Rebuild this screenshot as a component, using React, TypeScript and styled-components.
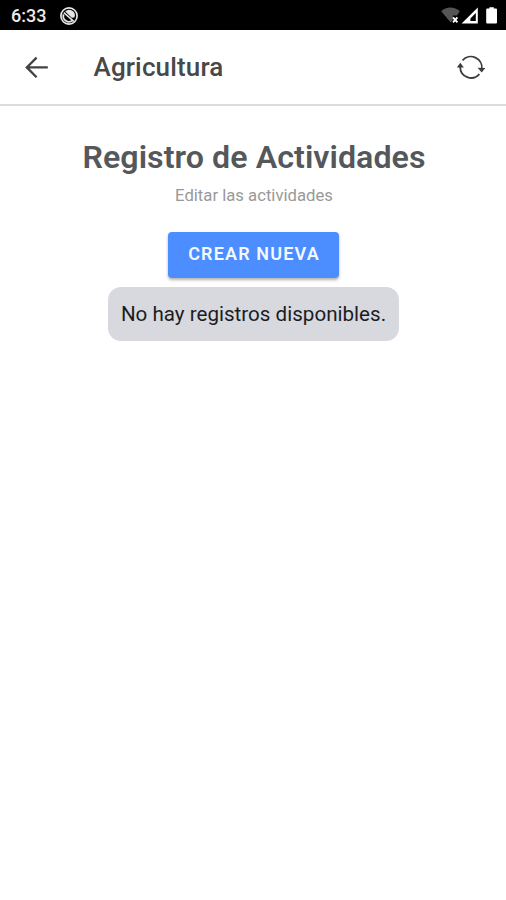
import React from "react"
import styled, { createGlobalStyle } from "styled-components"

function App() {
   return (
      <Screen>
         <GlobalStyle />
         <StatusBar>
            <Clock>6:33</Clock>
            <SyncIcon />
            <StatusIcons />
         </StatusBar>
         <Toolbar>
            <IconButton aria-label="Volver">
               <BackIcon />
            </IconButton>
            <ToolbarTitle>Agricultura</ToolbarTitle>
            <IconButton aria-label="Actualizar">
               <RefreshIcon />
            </IconButton>
         </Toolbar>
         <Content>
            <Heading>Registro de Actividades</Heading>
            <Subtitle>Editar las actividades</Subtitle>
            <CreateButton>Crear nueva</CreateButton>
            <EmptyChip>No hay registros disponibles.</EmptyChip>
         </Content>
      </Screen>
   )
}

function SyncIcon() {
   return (
      <svg width="20" height="20" viewBox="0 0 20 20" fill="none">
         <circle cx="10" cy="10" r="8.1" stroke="#e6e6e6" strokeWidth="1.7" />
         <path d="M6.2 5.6A5.6 5.6 0 0 1 15.4 11.6L12.8 11.8Z" fill="#e6e6e6" />
         <path d="M4.6 8.4A5.6 5.6 0 0 0 13.6 14.4" stroke="#e6e6e6" strokeWidth="1.8" />
         <path d="M4.8 6.6L14.8 15.4" stroke="#e6e6e6" strokeWidth="1.5" />
      </svg>
   )
}

function StatusIcons() {
   return (
      <Indicators width="60" height="20" viewBox="0 0 60 20">
         {/* wifi without connection */}
         <path d="M0.2 6.2C5.2 1.2 13.6 1.2 18.8 6.2L16 10.4H11.8V14.8L9.7 17.4Z" fill="#555" />
         <path d="M12 12.4L16.4 17.4M16.4 12.4L12 17.4" stroke="#fff" strokeWidth="1.9" />
         {/* signal */}
         <path fillRule="evenodd" d="M36.8 2.4V18.6H20.6ZM34.8 8V16H29.4V13.6Z" fill="#fff" />
         {/* battery */}
         <path d="M48.4 2.2H52.8V3.6H55Q56 3.6 56 4.6V17.6Q56 18.6 55 18.6H46.2Q45.2 18.6 45.2 17.6V4.6Q45.2 3.6 46.2 3.6H48.4Z" fill="#fff" />
      </Indicators>
   )
}

function BackIcon() {
   return (
      <svg width="24" height="22" viewBox="0 0 24 22" fill="none" stroke="#424242" strokeWidth="2.3">
         <path d="M12.6 1.6L2.8 11.4L12.6 21.2M3 11.4H23.8" />
      </svg>
   )
}

function RefreshIcon() {
   return (
      <svg width="28" height="26" viewBox="0 0 28 26" fill="none" stroke="#3c3c3c" strokeWidth="1.8">
         <path d="M5.6 6.4A11 11 0 0 1 24.8 15" />
         <path d="M22.4 20.2A11 11 0 0 1 3.2 12.6" />
         <path d="M20.6 13.8L24.7 18.4L28.2 14Z" fill="#3c3c3c" stroke="none" />
         <path d="M-0.2 13.4H6.9L3.3 8.8Z" fill="#3c3c3c" stroke="none" />
      </svg>
   )
}

const GlobalStyle = createGlobalStyle`
   * {
      box-sizing: border-box;
   }

   body {
      margin: 0;
      background: #fff;
      font-family: Roboto, "Liberation Sans", sans-serif;
   }
`

const Screen = styled.div`
   display: flex;
   flex-direction: column;
   min-height: 100vh;
   background: #fff;
`

const StatusBar = styled.div`
   display: flex;
   align-items: center;
   height: 30px;
   padding: 2px 5px 0 11px;
   background: #000;
`

const Clock = styled.span`
   width: 48px;
   color: #ececec;
   font-size: 18px;
   font-weight: 500;
   line-height: 28px;
`

const Indicators = styled.svg`
   margin-left: auto;
   margin-bottom: 2px;
`

const Toolbar = styled.header`
   display: flex;
   align-items: center;
   height: 76px;
   padding: 0 21px 0 24px;
   border-bottom: 2px solid #dcdcdc;
`

const IconButton = styled.button`
   display: flex;
   padding: 0;
   border: 0;
   background: none;
`

const ToolbarTitle = styled.div`
   flex: 1;
   padding-left: 45.5px;
   color: #484848;
   font-size: 26px;
   font-weight: 500;
   line-height: 32px;
   letter-spacing: 0.15px;
`

const Content = styled.main`
   display: flex;
   flex-direction: column;
   align-items: center;
   padding-top: 31px;
`

const Heading = styled.h1`
   margin: 0;
   padding-left: 2px;
   color: #55585b;
   font-size: 32.2px;
   font-weight: 600;
   line-height: 40px;
   letter-spacing: 0.05px;
`

const Subtitle = styled.p`
   margin: 9px 0 0;
   padding-left: 2px;
   color: #999;
   font-size: 16.7px;
   line-height: 20px;
`

const CreateButton = styled.button`
   width: 171px;
   height: 46px;
   margin-top: 26px;
   padding: 0 0 2px 2px;
   border: 0;
   border-radius: 4px;
   background: #4c8dff;
   box-shadow: 0 2px 3px rgba(0, 0, 0, 0.3);
   color: #f4f8ff;
   font-family: inherit;
   font-size: 18px;
   font-weight: 600;
   line-height: 20px;
   letter-spacing: 1.15px;
   text-transform: uppercase;
`

const EmptyChip = styled.div`
   width: 291px;
   margin-top: 9px;
   padding-left: 1px;
   border-radius: 13px;
   background: #d7d9df;
   color: #1c1d1f;
   font-size: 20.6px;
   line-height: 54px;
   text-align: center;
   white-space: nowrap;
`

export default App
